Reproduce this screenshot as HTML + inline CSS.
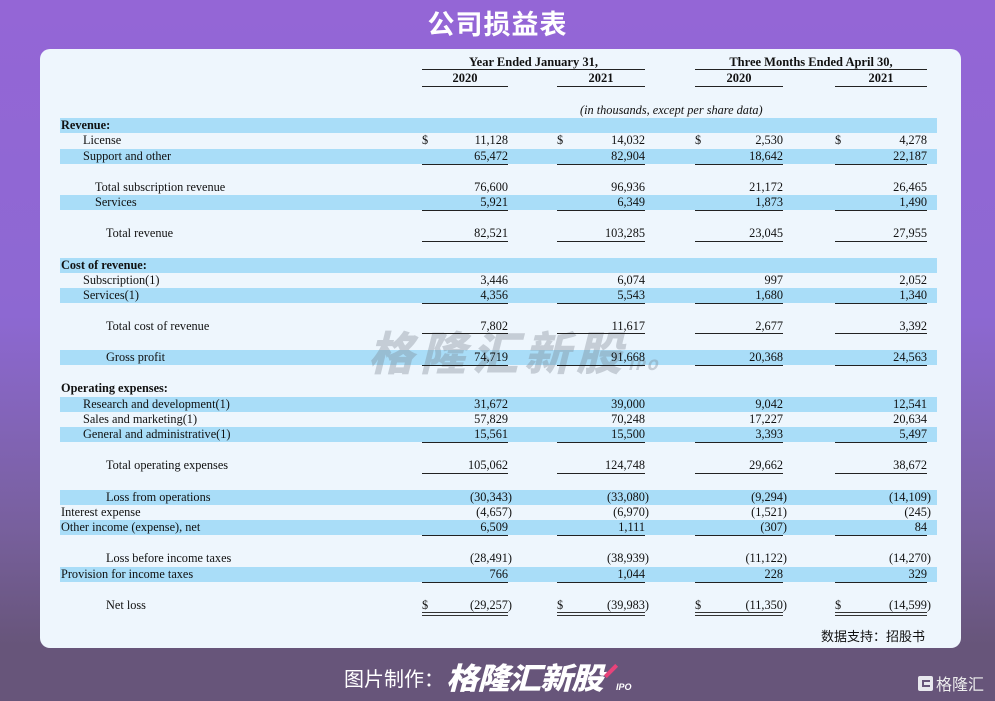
<!DOCTYPE html>
<html><head><meta charset="utf-8"><style>
*{margin:0;padding:0;box-sizing:border-box}
body{width:995px;height:701px;overflow:hidden;position:relative;background:linear-gradient(180deg,#9466d6 0%,#8d68d2 45%,#78609e 75%,#67557a 92%,#67557a 100%);font-family:"Liberation Serif",serif;color:#111}
.title{position:absolute;top:3px;left:0;width:995px;text-align:center;color:#fff;font:bold 27px "Liberation Sans","Noto Sans CJK SC",sans-serif;letter-spacing:1px}
.panel{position:absolute;left:40px;top:49px;width:921px;height:599px;background:#eef6fd;border-radius:10px}
.a{position:absolute;font-size:12.3px;line-height:15px;white-space:nowrap}
.b{position:absolute;left:60px;width:877px;height:15px;background:#a9ddf8}
.hd{position:absolute;font-weight:bold;font-size:12.5px;text-align:center;line-height:14px}
.l{position:absolute;height:1.4px;background:#222}
.n{position:absolute;text-align:right;font-size:12.3px;line-height:15px}
.wm{position:absolute;left:368px;top:318px;font:italic 900 46px "Noto Sans CJK SC",sans-serif;color:rgba(120,130,140,0.35);letter-spacing:6px}
</style></head><body>
<div class="title">公司损益表</div>
<div class="panel"></div>

<div class="hd" style="left:422px;width:223px;top:55px">Year Ended January 31,</div>
<div class="l" style="left:422px;width:223px;top:69px"></div>
<div class="hd" style="left:422px;width:86px;top:71px">2020</div>
<div class="hd" style="left:557px;width:88px;top:71px">2021</div>
<div class="l" style="left:422px;width:86px;top:86px"></div>
<div class="l" style="left:557px;width:88px;top:86px"></div>
<div class="hd" style="left:695px;width:232px;top:55px">Three Months Ended April 30,</div>
<div class="l" style="left:695px;width:232px;top:69px"></div>
<div class="hd" style="left:695px;width:88px;top:71px">2020</div>
<div class="hd" style="left:835px;width:92px;top:71px">2021</div>
<div class="l" style="left:695px;width:88px;top:86px"></div>
<div class="l" style="left:835px;width:92px;top:86px"></div>
<div class="a" style="left:580px;top:103px;font-style:italic">(in thousands, except per share data)</div>

<div class="b" style="top:118px"></div>
<div class="b" style="top:149px"></div>
<div class="b" style="top:195px"></div>
<div class="b" style="top:258px"></div>
<div class="b" style="top:288px"></div>
<div class="b" style="top:350px"></div>
<div class="b" style="top:397px"></div>
<div class="b" style="top:427px"></div>
<div class="b" style="top:490px"></div>
<div class="b" style="top:520px"></div>
<div class="b" style="top:567px"></div>

<div class="wm">格隆汇新股<span style="font-size:14px;letter-spacing:2px">IPO</span></div>

<div class="a" style="left:61px;top:118px;font-weight:bold">Revenue:</div>
<div class="a" style="left:83px;top:133px">License</div>
<div class="a" style="left:83px;top:149px">Support and other</div>
<div class="a" style="left:95px;top:180px">Total subscription revenue</div>
<div class="a" style="left:95px;top:195px">Services</div>
<div class="a" style="left:106px;top:226px">Total revenue</div>
<div class="a" style="left:61px;top:258px;font-weight:bold">Cost of revenue:</div>
<div class="a" style="left:83px;top:273px">Subscription(1)</div>
<div class="a" style="left:83px;top:288px">Services(1)</div>
<div class="a" style="left:106px;top:319px">Total cost of revenue</div>
<div class="a" style="left:106px;top:350px">Gross profit</div>
<div class="a" style="left:61px;top:381px;font-weight:bold">Operating expenses:</div>
<div class="a" style="left:83px;top:397px">Research and development(1)</div>
<div class="a" style="left:83px;top:412px">Sales and marketing(1)</div>
<div class="a" style="left:83px;top:427px">General and administrative(1)</div>
<div class="a" style="left:106px;top:458px">Total operating expenses</div>
<div class="a" style="left:106px;top:490px">Loss from operations</div>
<div class="a" style="left:61px;top:505px">Interest expense</div>
<div class="a" style="left:61px;top:520px">Other income (expense), net</div>
<div class="a" style="left:106px;top:551px">Loss before income taxes</div>
<div class="a" style="left:61px;top:567px">Provision for income taxes</div>
<div class="a" style="left:106px;top:598px">Net loss</div>

<div class="a" style="left:422px;top:133px">$</div><div class="a" style="left:557px;top:133px">$</div><div class="a" style="left:695px;top:133px">$</div><div class="a" style="left:835px;top:133px">$</div>
<div class="a" style="left:422px;top:598px">$</div><div class="a" style="left:557px;top:598px">$</div><div class="a" style="left:695px;top:598px">$</div><div class="a" style="left:835px;top:598px">$</div>

<div style="position:absolute;left:0;top:0">
<div class="n" style="left:420px;width:88px;top:133px">11,128</div><div class="n" style="left:555px;width:90px;top:133px">14,032</div><div class="n" style="left:693px;width:90px;top:133px">2,530</div><div class="n" style="left:833px;width:94px;top:133px">4,278</div>
<div class="n" style="left:420px;width:88px;top:149px">65,472</div><div class="n" style="left:555px;width:90px;top:149px">82,904</div><div class="n" style="left:693px;width:90px;top:149px">18,642</div><div class="n" style="left:833px;width:94px;top:149px">22,187</div>
<div class="n" style="left:420px;width:88px;top:180px">76,600</div><div class="n" style="left:555px;width:90px;top:180px">96,936</div><div class="n" style="left:693px;width:90px;top:180px">21,172</div><div class="n" style="left:833px;width:94px;top:180px">26,465</div>
<div class="n" style="left:420px;width:88px;top:195px">5,921</div><div class="n" style="left:555px;width:90px;top:195px">6,349</div><div class="n" style="left:693px;width:90px;top:195px">1,873</div><div class="n" style="left:833px;width:94px;top:195px">1,490</div>
<div class="n" style="left:420px;width:88px;top:226px">82,521</div><div class="n" style="left:555px;width:90px;top:226px">103,285</div><div class="n" style="left:693px;width:90px;top:226px">23,045</div><div class="n" style="left:833px;width:94px;top:226px">27,955</div>
<div class="n" style="left:420px;width:88px;top:273px">3,446</div><div class="n" style="left:555px;width:90px;top:273px">6,074</div><div class="n" style="left:693px;width:90px;top:273px">997</div><div class="n" style="left:833px;width:94px;top:273px">2,052</div>
<div class="n" style="left:420px;width:88px;top:288px">4,356</div><div class="n" style="left:555px;width:90px;top:288px">5,543</div><div class="n" style="left:693px;width:90px;top:288px">1,680</div><div class="n" style="left:833px;width:94px;top:288px">1,340</div>
<div class="n" style="left:420px;width:88px;top:319px">7,802</div><div class="n" style="left:555px;width:90px;top:319px">11,617</div><div class="n" style="left:693px;width:90px;top:319px">2,677</div><div class="n" style="left:833px;width:94px;top:319px">3,392</div>
<div class="n" style="left:420px;width:88px;top:350px">74,719</div><div class="n" style="left:555px;width:90px;top:350px">91,668</div><div class="n" style="left:693px;width:90px;top:350px">20,368</div><div class="n" style="left:833px;width:94px;top:350px">24,563</div>
<div class="n" style="left:420px;width:88px;top:397px">31,672</div><div class="n" style="left:555px;width:90px;top:397px">39,000</div><div class="n" style="left:693px;width:90px;top:397px">9,042</div><div class="n" style="left:833px;width:94px;top:397px">12,541</div>
<div class="n" style="left:420px;width:88px;top:412px">57,829</div><div class="n" style="left:555px;width:90px;top:412px">70,248</div><div class="n" style="left:693px;width:90px;top:412px">17,227</div><div class="n" style="left:833px;width:94px;top:412px">20,634</div>
<div class="n" style="left:420px;width:88px;top:427px">15,561</div><div class="n" style="left:555px;width:90px;top:427px">15,500</div><div class="n" style="left:693px;width:90px;top:427px">3,393</div><div class="n" style="left:833px;width:94px;top:427px">5,497</div>
<div class="n" style="left:420px;width:88px;top:458px">105,062</div><div class="n" style="left:555px;width:90px;top:458px">124,748</div><div class="n" style="left:693px;width:90px;top:458px">29,662</div><div class="n" style="left:833px;width:94px;top:458px">38,672</div>
<div class="n" style="left:420px;width:92px;top:490px">(30,343)</div><div class="n" style="left:555px;width:94px;top:490px">(33,080)</div><div class="n" style="left:693px;width:94px;top:490px">(9,294)</div><div class="n" style="left:833px;width:98px;top:490px">(14,109)</div>
<div class="n" style="left:420px;width:92px;top:505px">(4,657)</div><div class="n" style="left:555px;width:94px;top:505px">(6,970)</div><div class="n" style="left:693px;width:94px;top:505px">(1,521)</div><div class="n" style="left:833px;width:98px;top:505px">(245)</div>
<div class="n" style="left:420px;width:88px;top:520px">6,509</div><div class="n" style="left:555px;width:90px;top:520px">1,111</div><div class="n" style="left:693px;width:94px;top:520px">(307)</div><div class="n" style="left:833px;width:94px;top:520px">84</div>
<div class="n" style="left:420px;width:92px;top:551px">(28,491)</div><div class="n" style="left:555px;width:94px;top:551px">(38,939)</div><div class="n" style="left:693px;width:94px;top:551px">(11,122)</div><div class="n" style="left:833px;width:98px;top:551px">(14,270)</div>
<div class="n" style="left:420px;width:88px;top:567px">766</div><div class="n" style="left:555px;width:90px;top:567px">1,044</div><div class="n" style="left:693px;width:90px;top:567px">228</div><div class="n" style="left:833px;width:94px;top:567px">329</div>
<div class="n" style="left:420px;width:92px;top:598px">(29,257)</div><div class="n" style="left:555px;width:94px;top:598px">(39,983)</div><div class="n" style="left:693px;width:94px;top:598px">(11,350)</div><div class="n" style="left:833px;width:98px;top:598px">(14,599)</div>
</div>

<div class="l" style="left:422px;width:86px;top:164px"></div><div class="l" style="left:557px;width:88px;top:164px"></div><div class="l" style="left:695px;width:88px;top:164px"></div><div class="l" style="left:835px;width:92px;top:164px"></div>
<div class="l" style="left:422px;width:86px;top:210px"></div><div class="l" style="left:557px;width:88px;top:210px"></div><div class="l" style="left:695px;width:88px;top:210px"></div><div class="l" style="left:835px;width:92px;top:210px"></div>
<div class="l" style="left:422px;width:86px;top:241px"></div><div class="l" style="left:557px;width:88px;top:241px"></div><div class="l" style="left:695px;width:88px;top:241px"></div><div class="l" style="left:835px;width:92px;top:241px"></div>
<div class="l" style="left:422px;width:86px;top:303px"></div><div class="l" style="left:557px;width:88px;top:303px"></div><div class="l" style="left:695px;width:88px;top:303px"></div><div class="l" style="left:835px;width:92px;top:303px"></div>
<div class="l" style="left:422px;width:86px;top:333px"></div><div class="l" style="left:557px;width:88px;top:333px"></div><div class="l" style="left:695px;width:88px;top:333px"></div><div class="l" style="left:835px;width:92px;top:333px"></div>
<div class="l" style="left:422px;width:86px;top:365px"></div><div class="l" style="left:557px;width:88px;top:365px"></div><div class="l" style="left:695px;width:88px;top:365px"></div><div class="l" style="left:835px;width:92px;top:365px"></div>
<div class="l" style="left:422px;width:86px;top:442px"></div><div class="l" style="left:557px;width:88px;top:442px"></div><div class="l" style="left:695px;width:88px;top:442px"></div><div class="l" style="left:835px;width:92px;top:442px"></div>
<div class="l" style="left:422px;width:86px;top:473px"></div><div class="l" style="left:557px;width:88px;top:473px"></div><div class="l" style="left:695px;width:88px;top:473px"></div><div class="l" style="left:835px;width:92px;top:473px"></div>
<div class="l" style="left:422px;width:86px;top:535px"></div><div class="l" style="left:557px;width:88px;top:535px"></div><div class="l" style="left:695px;width:88px;top:535px"></div><div class="l" style="left:835px;width:92px;top:535px"></div>
<div class="l" style="left:422px;width:86px;top:582px"></div><div class="l" style="left:557px;width:88px;top:582px"></div><div class="l" style="left:695px;width:88px;top:582px"></div><div class="l" style="left:835px;width:92px;top:582px"></div>
<div class="l" style="left:422px;width:86px;top:612px;height:4px;background:none;border-top:1.3px solid #333;border-bottom:1.3px solid #333"></div>
<div class="l" style="left:557px;width:88px;top:612px;height:4px;background:none;border-top:1.3px solid #333;border-bottom:1.3px solid #333"></div>
<div class="l" style="left:695px;width:88px;top:612px;height:4px;background:none;border-top:1.3px solid #333;border-bottom:1.3px solid #333"></div>
<div class="l" style="left:835px;width:92px;top:612px;height:4px;background:none;border-top:1.3px solid #333;border-bottom:1.3px solid #333"></div>

<div class="a" style="left:821px;top:628px;font:13px 'Noto Sans CJK SC',sans-serif;line-height:16px">数据支持：招股书</div>

<div style="position:absolute;left:344px;top:666px;color:#fff;font:20px 'Noto Sans CJK SC',sans-serif;line-height:24px">图片制作：</div>
<div style="position:absolute;left:446px;top:658px;color:#fff;font:italic 900 30px 'Noto Sans CJK SC',sans-serif;line-height:36px;letter-spacing:-1px;transform:scaleX(1.08);transform-origin:left">格隆汇新股</div>
<div style="position:absolute;left:603px;top:669px;width:16px;height:4px;background:#e8437a;transform:rotate(-45deg)"></div>
<div style="position:absolute;left:616px;top:682px;color:#fff;font:italic bold 9px 'Liberation Sans',sans-serif">IPO</div>
<div style="position:absolute;left:918px;top:676px;width:15px;height:15px;background:#e8e8ee;border-radius:2px"></div>
<div style="position:absolute;left:922px;top:680px;width:8px;height:7px;border:2px solid #67557a;border-right:none"></div>
<div style="position:absolute;left:936px;top:672px;color:#eee;font:16px 'Noto Sans CJK SC',sans-serif;line-height:22px">格隆汇</div>
</body></html>
